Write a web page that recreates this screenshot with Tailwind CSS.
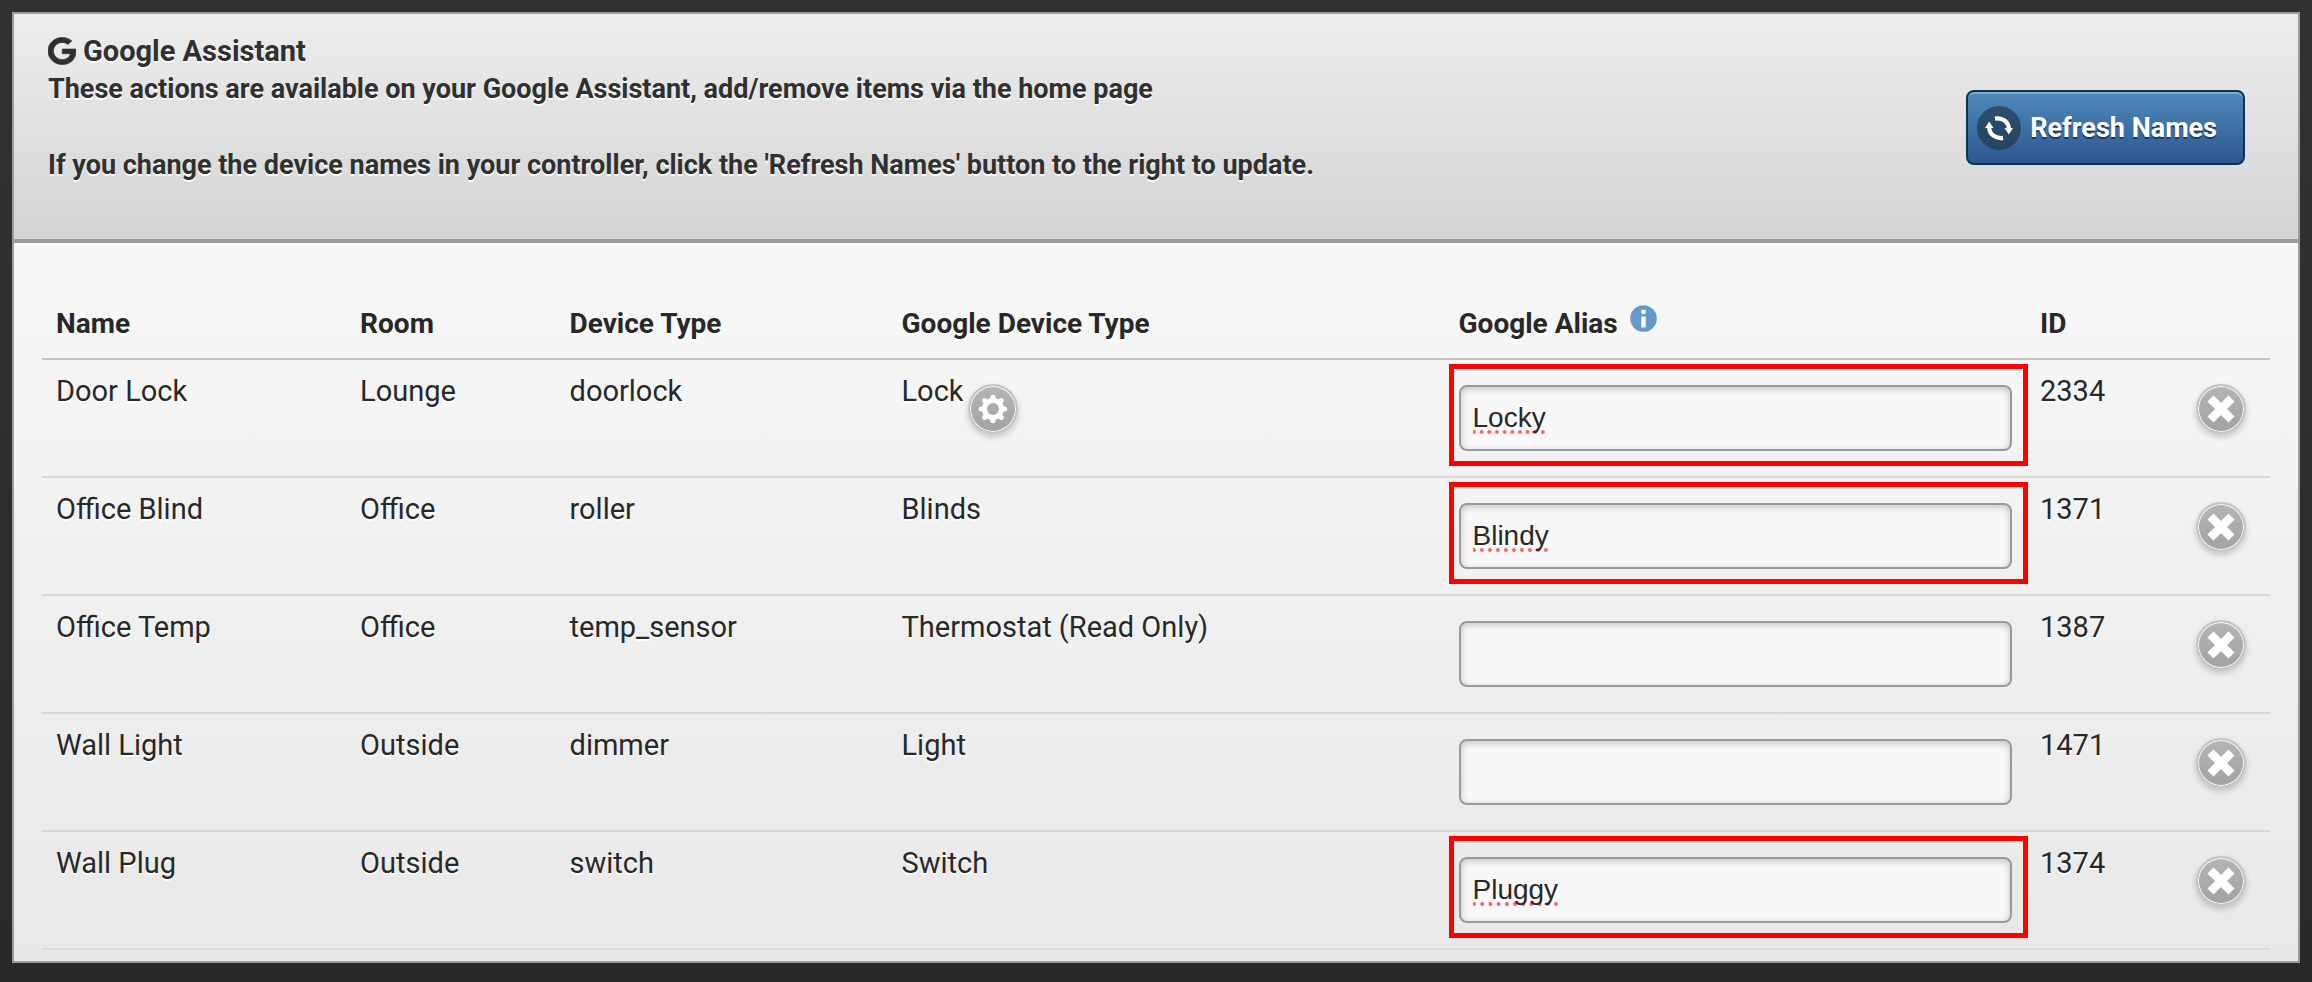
<!DOCTYPE html>
<html lang="en">
<head>
    <meta charset="UTF-8">
    <meta name="viewport" content="width=device-width, initial-scale=1.0">
    <title>Google Assistant</title>
    <script src="https://cdn.jsdelivr.net/npm/@tailwindcss/browser@4"></script>
</head>
<body class="min-h-screen bg-linear-to-b from-[#323232] to-[#292929] px-3 pt-3 pb-[19px] font-['Roboto',sans-serif] text-[#282828]">
    <!-- Shared icons -->
    <svg class="hidden">
        <symbol id="icon-delete" viewBox="0 0 50 50">
            <path d="M14.5 14.5L35.5 35.5M35.5 14.5L14.5 35.5" fill="none" stroke="#fff" stroke-width="8.5" />
        </symbol>
    </svg>

    <main class="border-2 border-[#9c9c9c]">
        <!-- Header -->
        <header class="flex items-start justify-between border-b-4 border-[#9c9c9c] bg-linear-to-b from-[#ededed] to-[#d4d4d4] pt-[18px] pr-[53px] pb-[55px] pl-[34px] text-[27px] leading-[38px] font-bold text-[#303030] text-shadow-[0_2px_0_#fff]">
            <div>
                <h1 class="flex items-center gap-[7px] text-[29px]">
                    <svg class="size-7" viewBox="0 0 488 512" preserveAspectRatio="none" fill="currentColor" stroke="currentColor" stroke-width="12" aria-hidden="true">
                        <path d="M488 261.8C488 403.3 391.1 504 248 504 110.8 504 0 393.2 0 256S110.8 8 248 8c66.8 0 123 24.5 166.3 64.9l-67.5 64.9C258.5 52.6 94.3 116.6 94.3 256c0 86.5 69.1 156.6 153.7 156.6 98.2 0 135-70.4 140.8-106.9H248v-85.3h236.1c2.3 12.7 3.9 24.9 3.9 41.4z" />
                    </svg>
                    Google Assistant
                </h1>
                <p>These actions are available on your Google Assistant, add/remove items via the home page</p>
                <p class="mt-[38px]">If you change the device names in your controller, click the 'Refresh Names' button to the right to update.</p>
            </div>
            <button type="button" class="mt-[58px] flex h-[75px] shrink-0 items-center gap-[9px] rounded-lg border-2 border-[#0b3352] bg-linear-to-b from-[#508abb] to-[#2c578e] pr-[26px] pl-[9px] text-white inset-shadow-[0_2px_0_rgb(255_255_255/0.3)] text-shadow-[0_2px_0_#1c3c63]">
                <span class="flex size-11 items-center justify-center rounded-full bg-[#21344a]/65">
                    <svg class="size-11" viewBox="0 0 44 44" aria-hidden="true">
                        <path d="M18 12.6C26 11.5 31.8 16 31.8 23M26 31.9C18 33 12.2 28 12.2 21" fill="none" stroke="#fff" stroke-width="4.2" />
                        <path d="M27.5 22L36 22L31.8 28.5ZM8 22L16.5 22L12.2 15.5Z" fill="#fff" />
                    </svg>
                </span>
                Refresh Names
            </button>
        </header>

        <!-- Device list -->
        <section class="bg-linear-to-b from-[#f8f8f8] to-[#e8e8e8] px-7 pt-[47px] pb-[11px]">
            <table class="w-full table-fixed border-collapse text-left text-[29px] leading-[38px] text-shadow-[0_2px_0_#fff]">
                <thead>
                    <tr class="border-b-2 border-[#c4c4c4] text-[28px]">
                        <th class="w-[13.65%] px-[14px] py-[15px]">Name</th>
                        <th class="w-[9.4%] px-[14px] py-[15px]">Room</th>
                        <th class="w-[14.9%] px-[14px] py-[15px]">Device Type</th>
                        <th class="w-[25%] px-[14px] py-[15px]">Google Device Type</th>
                        <th class="w-[26.1%] px-[14px] py-[15px]">
                            <div class="flex items-start gap-3">
                                Google Alias
                                <button type="button" aria-label="About Google Alias">
                                    <svg class="size-[27px]" viewBox="0 0 27 27" aria-hidden="true">
                                        <circle cx="13.5" cy="13.5" r="13.3" fill="#6699cb" />
                                        <circle cx="13.5" cy="7" r="2.4" fill="#fff" />
                                        <path d="M11.3 11.5h4.4v11h-4.4z" fill="#fff" />
                                    </svg>
                                </button>
                            </div>
                        </th>
                        <th class="px-[14px] py-[15px]">ID</th>
                    </tr>
                </thead>
                <tbody class="align-top">
                    <tr class="h-[118px] border-b-2 border-[#dadada]">
                        <td class="px-[14px] pt-3">Door Lock</td>
                        <td class="px-[14px] pt-3">Lounge</td>
                        <td class="px-[14px] pt-3">doorlock</td>
                        <td class="px-[14px] pt-3">
                            <div class="flex items-start gap-1">
                                Lock
                                <button type="button" aria-label="Lock settings" class="mt-3 size-[50px] rounded-full border-2 border-[#c4c4c4] bg-linear-to-b from-[#b4b4b4] to-[#a2a2a2] shadow-[0_3px_6px_rgb(0_0_0/0.2)] inset-shadow-[0_0_0_1px_#fff]">
                                    <svg class="-m-[2px] size-[50px]" viewBox="0 0 50 50" aria-hidden="true">
                                        <circle cx="25" cy="25" r="8.5" fill="none" stroke="#fff" stroke-width="5" />
                                        <path d="M25 15v-1.6M25 35v1.6M15 25h-1.6M35 25h1.6M17.9 17.9l-1.2-1.2M32.1 17.9l1.2-1.2M17.9 32.1l-1.2 1.2M32.1 32.1l1.2 1.2" fill="none" stroke="#fff" stroke-width="5.2" stroke-linecap="round" />
                                    </svg>
                                </button>
                            </div>
                        </td>
                        <td class="relative px-[14px] pt-[25px]">
                            <input type="text" value="Locky" aria-label="Google alias for Door Lock" class="block h-[66px] w-full rounded-lg border-2 border-[#999] bg-[#f8f8f8] px-3 font-['Liberation_Sans',sans-serif] text-[28px] underline decoration-[#ff6464] decoration-dotted decoration-[4px] underline-offset-[3px] [text-decoration-skip-ink:none] inset-shadow-[0_2px_7px_rgb(0_0_0/0.22)]">
                            <div class="pointer-events-none absolute top-1 -right-0.5 left-1 h-[102px] border-[5px] border-[#fe0000]"></div>
                        </td>
                        <td class="px-[14px] pt-3">
                            <div class="flex items-start justify-between">
                                2334
                                <button type="button" aria-label="Remove Door Lock" class="mt-3 mr-[10px] size-[50px] rounded-full border-2 border-[#c4c4c4] bg-linear-to-b from-[#b4b4b4] to-[#a2a2a2] shadow-[0_3px_6px_rgb(0_0_0/0.2)] inset-shadow-[0_0_0_1px_#fff]">
                                    <svg class="-m-[2px] size-[50px]" aria-hidden="true"><use href="#icon-delete" /></svg>
                                </button>
                            </div>
                        </td>
                    </tr>
                    <tr class="h-[118px] border-b-2 border-[#dadada]">
                        <td class="px-[14px] pt-3">Office Blind</td>
                        <td class="px-[14px] pt-3">Office</td>
                        <td class="px-[14px] pt-3">roller</td>
                        <td class="px-[14px] pt-3">Blinds</td>
                        <td class="relative px-[14px] pt-[25px]">
                            <input type="text" value="Blindy" aria-label="Google alias for Office Blind" class="block h-[66px] w-full rounded-lg border-2 border-[#999] bg-[#f8f8f8] px-3 font-['Liberation_Sans',sans-serif] text-[28px] underline decoration-[#ff6464] decoration-dotted decoration-[4px] underline-offset-[3px] [text-decoration-skip-ink:none] inset-shadow-[0_2px_7px_rgb(0_0_0/0.22)]">
                            <div class="pointer-events-none absolute top-1 -right-0.5 left-1 h-[102px] border-[5px] border-[#fe0000]"></div>
                        </td>
                        <td class="px-[14px] pt-3">
                            <div class="flex items-start justify-between">
                                1371
                                <button type="button" aria-label="Remove Office Blind" class="mt-3 mr-[10px] size-[50px] rounded-full border-2 border-[#c4c4c4] bg-linear-to-b from-[#b4b4b4] to-[#a2a2a2] shadow-[0_3px_6px_rgb(0_0_0/0.2)] inset-shadow-[0_0_0_1px_#fff]">
                                    <svg class="-m-[2px] size-[50px]" aria-hidden="true"><use href="#icon-delete" /></svg>
                                </button>
                            </div>
                        </td>
                    </tr>
                    <tr class="h-[118px] border-b-2 border-[#d8d8d8]">
                        <td class="px-[14px] pt-3">Office Temp</td>
                        <td class="px-[14px] pt-3">Office</td>
                        <td class="px-[14px] pt-3">temp_sensor</td>
                        <td class="px-[14px] pt-3">Thermostat (Read Only)</td>
                        <td class="px-[14px] pt-[25px]">
                            <input type="text" aria-label="Google alias for Office Temp" class="block h-[66px] w-full rounded-lg border-2 border-[#999] bg-[#f8f8f8] px-3 font-['Liberation_Sans',sans-serif] text-[28px] inset-shadow-[0_2px_7px_rgb(0_0_0/0.22)]">
                        </td>
                        <td class="px-[14px] pt-3">
                            <div class="flex items-start justify-between">
                                1387
                                <button type="button" aria-label="Remove Office Temp" class="mt-3 mr-[10px] size-[50px] rounded-full border-2 border-[#c4c4c4] bg-linear-to-b from-[#b4b4b4] to-[#a2a2a2] shadow-[0_3px_6px_rgb(0_0_0/0.2)] inset-shadow-[0_0_0_1px_#fff]">
                                    <svg class="-m-[2px] size-[50px]" aria-hidden="true"><use href="#icon-delete" /></svg>
                                </button>
                            </div>
                        </td>
                    </tr>
                    <tr class="h-[118px] border-b-2 border-[#d6d6d6]">
                        <td class="px-[14px] pt-3">Wall Light</td>
                        <td class="px-[14px] pt-3">Outside</td>
                        <td class="px-[14px] pt-3">dimmer</td>
                        <td class="px-[14px] pt-3">Light</td>
                        <td class="px-[14px] pt-[25px]">
                            <input type="text" aria-label="Google alias for Wall Light" class="block h-[66px] w-full rounded-lg border-2 border-[#999] bg-[#f8f8f8] px-3 font-['Liberation_Sans',sans-serif] text-[28px] inset-shadow-[0_2px_7px_rgb(0_0_0/0.22)]">
                        </td>
                        <td class="px-[14px] pt-3">
                            <div class="flex items-start justify-between">
                                1471
                                <button type="button" aria-label="Remove Wall Light" class="mt-3 mr-[10px] size-[50px] rounded-full border-2 border-[#c4c4c4] bg-linear-to-b from-[#b4b4b4] to-[#a2a2a2] shadow-[0_3px_6px_rgb(0_0_0/0.2)] inset-shadow-[0_0_0_1px_#fff]">
                                    <svg class="-m-[2px] size-[50px]" aria-hidden="true"><use href="#icon-delete" /></svg>
                                </button>
                            </div>
                        </td>
                    </tr>
                    <tr class="h-[118px] border-b-2 border-[#dcdcdc]">
                        <td class="px-[14px] pt-3">Wall Plug</td>
                        <td class="px-[14px] pt-3">Outside</td>
                        <td class="px-[14px] pt-3">switch</td>
                        <td class="px-[14px] pt-3">Switch</td>
                        <td class="relative px-[14px] pt-[25px]">
                            <input type="text" value="Pluggy" aria-label="Google alias for Wall Plug" class="block h-[66px] w-full rounded-lg border-2 border-[#999] bg-[#f8f8f8] px-3 font-['Liberation_Sans',sans-serif] text-[28px] underline decoration-[#ff6464] decoration-dotted decoration-[4px] underline-offset-[3px] [text-decoration-skip-ink:none] inset-shadow-[0_2px_7px_rgb(0_0_0/0.22)]">
                            <div class="pointer-events-none absolute top-1 -right-0.5 left-1 h-[102px] border-[5px] border-[#fe0000]"></div>
                        </td>
                        <td class="px-[14px] pt-3">
                            <div class="flex items-start justify-between">
                                1374
                                <button type="button" aria-label="Remove Wall Plug" class="mt-3 mr-[10px] size-[50px] rounded-full border-2 border-[#c4c4c4] bg-linear-to-b from-[#b4b4b4] to-[#a2a2a2] shadow-[0_3px_6px_rgb(0_0_0/0.2)] inset-shadow-[0_0_0_1px_#fff]">
                                    <svg class="-m-[2px] size-[50px]" aria-hidden="true"><use href="#icon-delete" /></svg>
                                </button>
                            </div>
                        </td>
                    </tr>
                </tbody>
            </table>
        </section>
    </main>
</body>
</html>
